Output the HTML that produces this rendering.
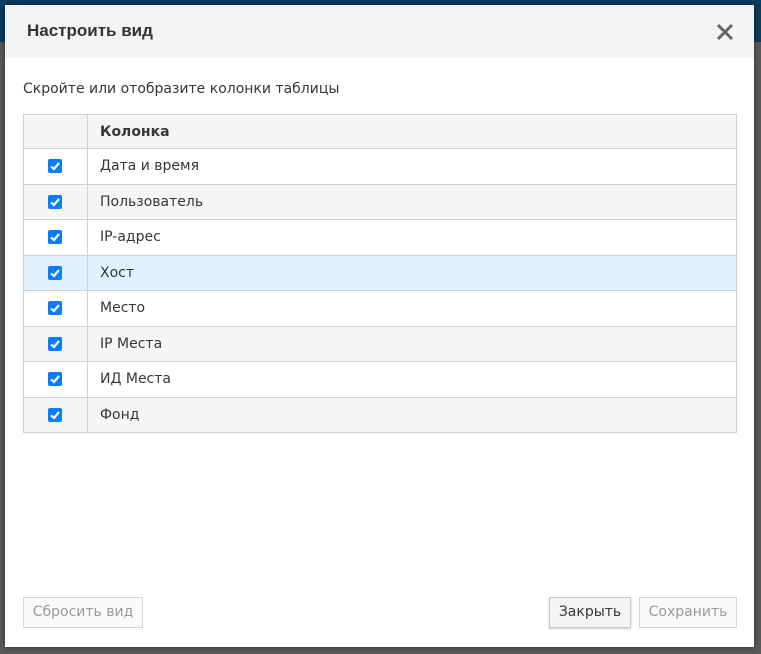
<!DOCTYPE html>
<html><head><meta charset="utf-8"><style>
body{margin:0;width:761px;height:654px;overflow:hidden;background:#5a5a5a;font-family:"DejaVu Sans","Liberation Sans",sans-serif;position:relative}
.top{position:absolute;left:0;top:0;width:761px;height:42px;background:#0b3e5f}
.dlg{position:absolute;left:5px;top:5px;width:749px;height:642px;background:#fff;box-shadow:0 0 6px rgba(0,0,0,.5)}
.hd{height:53px;background:#f4f4f4;position:relative}
.hd h1{margin:0;position:absolute;left:22px;top:16px;font-size:17px;font-weight:bold;color:#333;font-family:"Liberation Sans",sans-serif}
.x{position:absolute;right:20px;top:18px}
.sub{position:absolute;left:18px;top:76px;font-size:14px;color:#363636}
table{position:absolute;left:18px;top:109px;width:714px;border-collapse:collapse;font-size:14px;color:#363636;table-layout:fixed}
td{border:1px solid #d1d1d1;height:35.5px;padding:0 0 0 12px;box-sizing:border-box;line-height:16px}
td:first-child{padding:0;text-align:center}
tr.g td{background:#f5f5f5}
tr.h td{background:#def3ff}
th{border:1px solid #d1d1d1;background:#f5f5f5;height:34px;box-sizing:border-box;text-align:left;padding-left:12px;font-size:14px}
th:first-child{padding:0}
.cb{display:block;margin:0 auto 0 24px;width:14px;height:14px;background:#0a7cff;border-radius:2px}
.btn{position:absolute;top:592px;height:31px;border:1px solid #d6d6d6;background:#fafafa;font-size:14px;color:#9a9a9a;line-height:29px;text-align:center;box-sizing:border-box}
</style></head><body>
<div class="top"></div>
<div class="dlg">
<div class="hd"><h1>Настроить вид</h1>
<svg class="x" width="18" height="18" viewBox="0 0 18 18"><path d="M2 2L16 16M16 2L2 16" stroke="#666" stroke-width="3"/></svg></div>
<div class="sub">Скройте или отобразите колонки таблицы</div>
<table>
<colgroup><col style="width:64px"><col></colgroup>
<tr><th></th><th>Колонка</th></tr>
<tr><td><svg class="cb" viewBox="0 0 14 14"><path d="M3 7.5L6 10L11 4" stroke="#fff" stroke-width="2.2" fill="none"/></svg></td><td>Дата и время</td></tr>
<tr class="g"><td><svg class="cb" viewBox="0 0 14 14"><path d="M3 7.5L6 10L11 4" stroke="#fff" stroke-width="2.2" fill="none"/></svg></td><td>Пользователь</td></tr>
<tr><td><svg class="cb" viewBox="0 0 14 14"><path d="M3 7.5L6 10L11 4" stroke="#fff" stroke-width="2.2" fill="none"/></svg></td><td>IP-адрес</td></tr>
<tr class="h"><td><svg class="cb" viewBox="0 0 14 14"><path d="M3 7.5L6 10L11 4" stroke="#fff" stroke-width="2.2" fill="none"/></svg></td><td>Хост</td></tr>
<tr><td><svg class="cb" viewBox="0 0 14 14"><path d="M3 7.5L6 10L11 4" stroke="#fff" stroke-width="2.2" fill="none"/></svg></td><td>Место</td></tr>
<tr class="g"><td><svg class="cb" viewBox="0 0 14 14"><path d="M3 7.5L6 10L11 4" stroke="#fff" stroke-width="2.2" fill="none"/></svg></td><td>IP Места</td></tr>
<tr><td><svg class="cb" viewBox="0 0 14 14"><path d="M3 7.5L6 10L11 4" stroke="#fff" stroke-width="2.2" fill="none"/></svg></td><td>ИД Места</td></tr>
<tr class="g"><td><svg class="cb" viewBox="0 0 14 14"><path d="M3 7.5L6 10L11 4" stroke="#fff" stroke-width="2.2" fill="none"/></svg></td><td>Фонд</td></tr>
</table>
<div class="btn" style="left:18px;width:120px">Сбросить вид</div>
<div class="btn" style="left:544px;width:82px;color:#363636;background:#f4f4f4;border-color:#c8c8c8;box-shadow:0 1px 2px rgba(0,0,0,.2)">Закрыть</div>
<div class="btn" style="left:634px;width:98px">Сохранить</div>
</div>
</body></html>
